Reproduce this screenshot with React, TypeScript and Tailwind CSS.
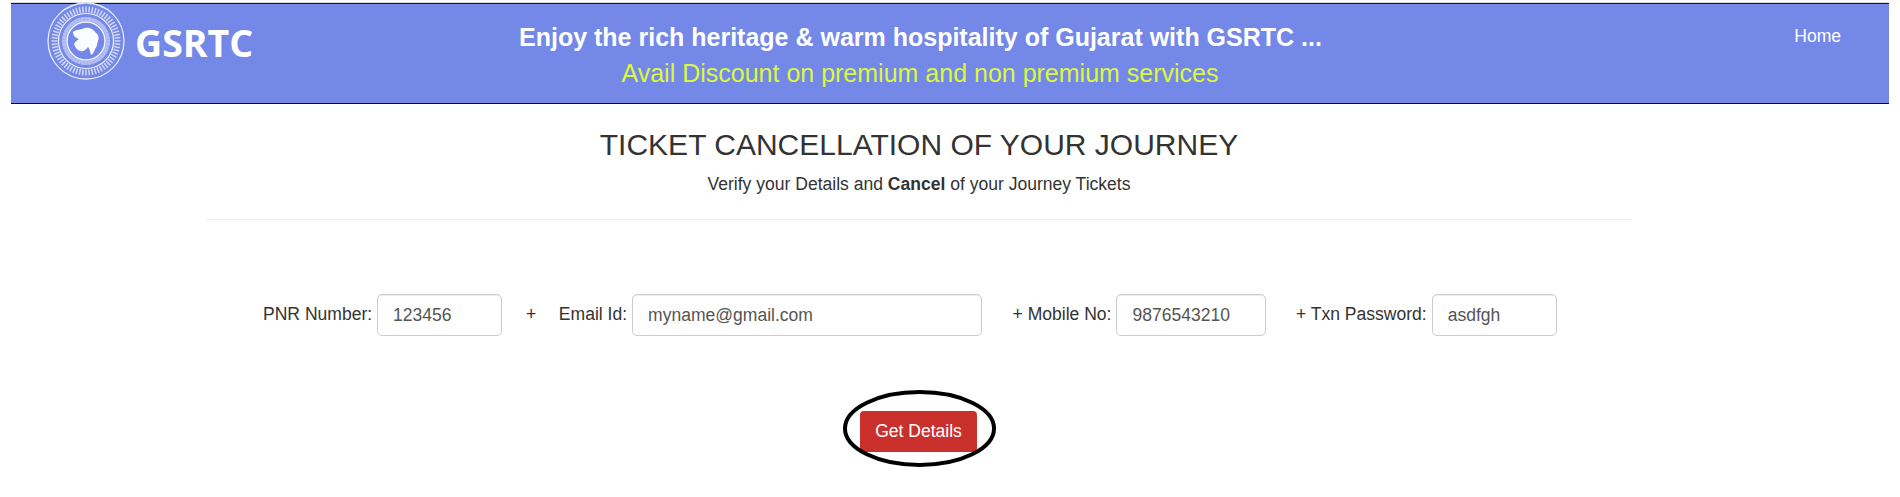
const RAYS = Array.from({ length: 64 }, (_, i) => (i * 360) / 64)
const DOTS = Array.from({ length: 40 }, (_, i) => (i * 360) / 40)

function Logo() {
  return (
    <svg viewBox="0 0 80 80" className="w-[80px] h-[80px] shrink-0 block" fill="none">
      <circle cx="40" cy="40" r="38" stroke="#e4e8fb" strokeWidth="1.3" />
      <g stroke="#e8ebfc" strokeWidth="1.5" opacity="0.8">
        {RAYS.map((a) => (
          <line key={a} x1="40" y1="5.5" x2="40" y2="11.5" transform={`rotate(${a} 40 40)`} />
        ))}
      </g>
      <circle cx="40" cy="40" r="27.5" stroke="#eef0fd" strokeWidth="1.2" />
      <g stroke="#e8ebfc" strokeWidth="3.5" opacity="0.55">
        {DOTS.map((a) => (
          <line key={a} x1="40" y1="16" x2="40" y2="20" transform={`rotate(${a} 40 40)`} />
        ))}
      </g>
      <circle cx="40" cy="40" r="19" fill="#7488e8" stroke="#f2f4fe" strokeWidth="1.5" />
      <path
        d="M27 31C30 28 35 29 39 27C44 26 48 29 50 32C53 34 53 37 52 40C51 43 51 46 49 48C48 51 47 53 45 54C44 51 44 48 42 46C40 49 37 51 34 50C31 49 29 46 28 43C29 41 31 39 33 38C30 37 27 35 27 31Z"
        fill="#fbfcff"
      />
    </svg>
  )
}

function Field({ label, value, width, className }: { label: string; value: string; width: string; className: string }) {
  return (
    <div className={`flex items-center ${className}`}>
      <label className="mr-[5px] -mt-[2px] whitespace-nowrap">{label}</label>
      <input
        readOnly
        value={value}
        className={`${width} h-[42px] rounded-[5px] border border-[#ccc] bg-white pl-[15px] text-[#555] outline-none shadow-[inset_0_1px_1px_rgba(0,0,0,0.075)]`}
      />
    </div>
  )
}

export default function App() {
  return (
    <div className="min-h-[497px] bg-white pt-[3px] text-[17.55px] text-[#333] font-['Liberation_Sans',Arial,sans-serif]">
      <header className="mx-[11px] h-[101px] flex bg-[#7488e8] border-t border-b border-t-[#10132c] border-b-[#0b0d26] shadow-[0_-1px_0_#d9d9df] text-white">
        <div className="w-[508px] shrink-0 flex items-start pl-[35px] -mt-[3px]">
          <Logo />
          <span className="ml-[9px] mt-[17px] text-[37.5px] leading-[50px] font-bold font-['Open_Sans',sans-serif]">GSRTC</span>
        </div>
        <div className="w-[802px] shrink-0 text-center pt-[16px]">
          <div className="text-[25px] leading-[34px] font-bold whitespace-nowrap">
            Enjoy the rich heritage &amp; warm hospitality of Gujarat with GSRTC ...
          </div>
          <div className="mt-[2px] text-[25px] leading-[34px] text-[#dcf83c] whitespace-nowrap">
            Avail Discount on premium and non premium services
          </div>
        </div>
        <div className="flex-1 flex justify-end pr-[48px] pt-[20px] leading-6">Home</div>
      </header>

      <main className="w-[1426px] ml-[206px]">
        <div className="h-[116px] border-b border-[#eee] text-center">
          <h1 className="pt-[21px] text-[30px] leading-[40px]">TICKET CANCELLATION OF YOUR JOURNEY</h1>
          <p className="mt-[7px] text-[17.55px] leading-[24px]">
            Verify your Details and <b>Cancel</b> of your Journey Tickets
          </p>
        </div>

        <form className="flex items-center mt-[74px] pl-[57px] h-[42px]">
          <Field label="PNR Number:" value="123456" width="w-[125px]" className="" />
          <span className="ml-[24px] -mt-[2px]">+</span>
          <Field label="Email Id:" value="myname@gmail.com" width="w-[350px]" className="ml-[22.5px]" />
          <Field label="+ Mobile No:" value="9876543210" width="w-[150px]" className="ml-[30.5px]" />
          <Field label="+ Txn Password:" value="asdfgh" width="w-[125px]" className="ml-[29.5px]" />
        </form>

        <div className="flex justify-center mt-[75px] pr-[1px]">
          <div className="relative">
            <button type="button" className="block w-[117px] h-[41px] rounded-[4px] bg-[#c9302c] text-white">
              Get Details
            </button>
            <svg className="absolute left-[-17px] top-[-21px] w-[153px] h-[77px] pointer-events-none" viewBox="0 0 153 77" fill="none">
              <ellipse cx="76.5" cy="38.5" rx="74.5" ry="36.5" stroke="#000" strokeWidth="4" />
            </svg>
          </div>
        </div>
      </main>
    </div>
  )
}
